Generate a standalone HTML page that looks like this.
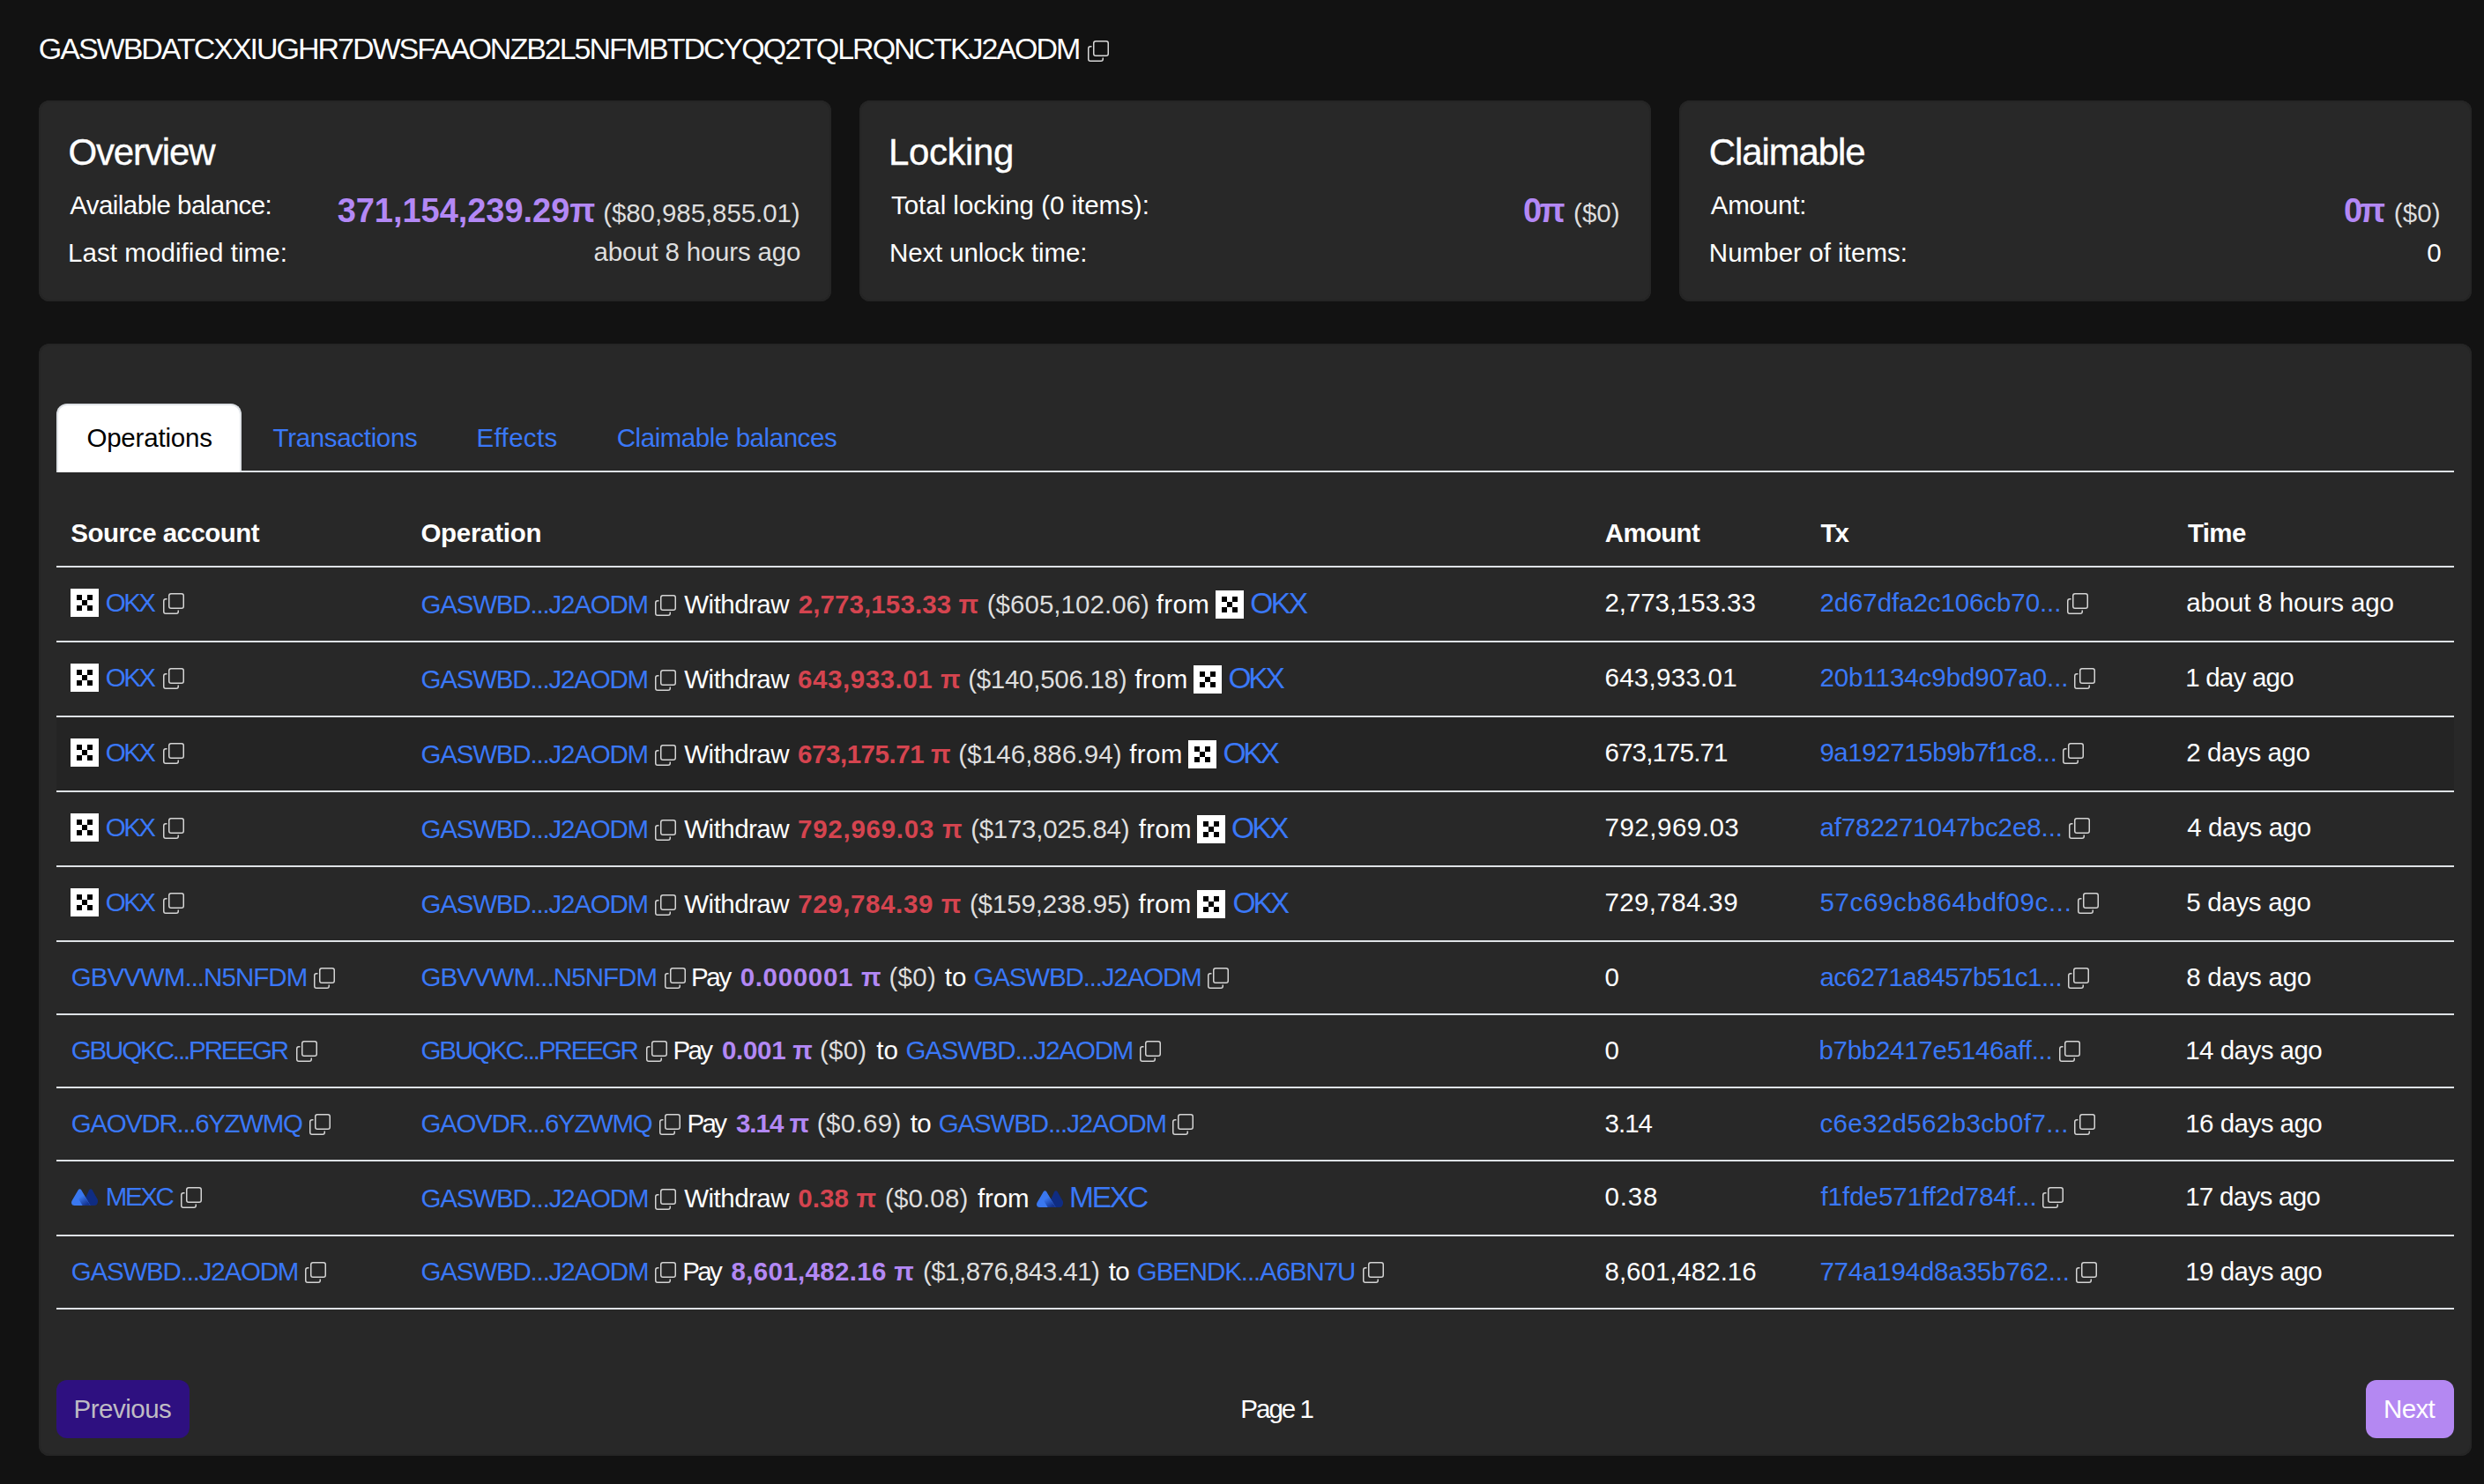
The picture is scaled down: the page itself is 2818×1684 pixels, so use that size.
<!DOCTYPE html>
<html><head><meta charset="utf-8"><style>
html,body{margin:0;padding:0;}
body{width:2818px;height:1684px;background:#121212;position:relative;overflow:hidden;font-family:"Liberation Sans", sans-serif;}
.t{position:absolute;white-space:pre;}
.ic{position:absolute;}
.card{position:absolute;top:114px;height:228px;background:#282828;border-radius:12px;box-shadow:inset 0 0 0 2px #252525;}
.hl{position:absolute;left:64px;width:2720px;height:2px;background:#dee2e6;}
</style></head><body>
<div class="card" style="left:44.00px;width:898.67px"></div>
<div class="card" style="left:974.67px;width:898.67px"></div>
<div class="card" style="left:1905.33px;width:898.67px"></div>
<div style="position:absolute;left:44px;top:390px;width:2760px;height:1262px;background:#282828;border-radius:12px;box-shadow:inset 0 0 0 2px #252525;"></div>
<div style="position:absolute;left:64px;top:458px;width:206px;height:76px;background:#fff;border:2px solid #dee2e6;border-bottom:none;border-radius:12px 12px 0 0;"></div>
<div style="position:absolute;left:274px;top:534px;width:2510px;height:2px;background:#dee2e6"></div>
<div style="position:absolute;left:64px;top:814px;width:2720px;height:83px;background:#242424"></div>
<div class="hl" style="top:642px"></div>
<div class="hl" style="top:727px"></div>
<div class="hl" style="top:812px"></div>
<div class="hl" style="top:897px"></div>
<div class="hl" style="top:982px"></div>
<div class="hl" style="top:1067px"></div>
<div class="hl" style="top:1150px"></div>
<div class="hl" style="top:1233px"></div>
<div class="hl" style="top:1316px"></div>
<div class="hl" style="top:1401px"></div>
<div class="hl" style="top:1484px"></div>
<div style="position:absolute;left:64px;top:1566px;width:151px;height:66px;background:#2e1080;border-radius:12px"></div>
<div style="position:absolute;left:2684px;top:1566px;width:100px;height:66px;background:#b488f2;border-radius:12px"></div>
<div class="t" style="left:43.8px;top:38.4px;font-size:34px;line-height:34px;font-weight:400;color:#ffffff;letter-spacing:-2.015px;">GASWBDATCXXIUGHR7DWSFAAONZB2L5NFMBTDCYQQ2TQLRQNCTKJ2AODM</div>
<div class="t" style="left:77.4px;top:151.7px;font-size:42px;line-height:42px;font-weight:400;color:#ffffff;letter-spacing:-1.114px;-webkit-text-stroke:0.35px currentColor;">Overview</div>
<div class="t" style="left:79.2px;top:218.1px;font-size:29.5px;line-height:29.5px;font-weight:400;color:#ffffff;letter-spacing:-0.547px;">Available balance:</div>
<div class="t" style="left:77.0px;top:272.1px;font-size:29.5px;line-height:29.5px;font-weight:400;color:#ffffff;letter-spacing:0.072px;">Last modified time:</div>
<div class="t" style="left:382.7px;top:219.8px;font-size:38px;line-height:38px;font-weight:700;color:#b388f5;letter-spacing:-0.043px;">371,154,239.29π</div>
<div class="t" style="left:684.2px;top:227.0px;font-size:29.5px;line-height:29.5px;font-weight:400;color:#dedede;letter-spacing:-0.087px;">($80,985,855.01)</div>
<div class="t" style="left:673.5px;top:271.3px;font-size:29.5px;line-height:29.5px;font-weight:400;color:#dedede;letter-spacing:-0.181px;">about 8 hours ago</div>
<div class="t" style="left:1008.1px;top:151.7px;font-size:42px;line-height:42px;font-weight:400;color:#ffffff;letter-spacing:-0.433px;-webkit-text-stroke:0.35px currentColor;">Locking</div>
<div class="t" style="left:1011.0px;top:218.1px;font-size:29.5px;line-height:29.5px;font-weight:400;color:#ffffff;letter-spacing:-0.026px;">Total locking (0 items):</div>
<div class="t" style="left:1009.0px;top:272.1px;font-size:29.5px;line-height:29.5px;font-weight:400;color:#ffffff;letter-spacing:-0.113px;">Next unlock time:</div>
<div class="t" style="left:1728.0px;top:219.8px;font-size:38px;line-height:38px;font-weight:700;color:#b388f5;letter-spacing:-2.600px;">0π</div>
<div class="t" style="left:1785.0px;top:227.0px;font-size:29.5px;line-height:29.5px;font-weight:400;color:#dedede;letter-spacing:0.067px;">($0)</div>
<div class="t" style="left:1938.8px;top:151.7px;font-size:42px;line-height:42px;font-weight:400;color:#ffffff;letter-spacing:-1.125px;-webkit-text-stroke:0.35px currentColor;">Claimable</div>
<div class="t" style="left:1940.8px;top:218.1px;font-size:29.5px;line-height:29.5px;font-weight:400;color:#ffffff;letter-spacing:-0.217px;">Amount:</div>
<div class="t" style="left:1938.8px;top:272.1px;font-size:29.5px;line-height:29.5px;font-weight:400;color:#ffffff;letter-spacing:0.040px;">Number of items:</div>
<div class="t" style="left:2658.9px;top:219.8px;font-size:38px;line-height:38px;font-weight:700;color:#b388f5;letter-spacing:-3.100px;">0π</div>
<div class="t" style="left:2715.7px;top:227.0px;font-size:29.5px;line-height:29.5px;font-weight:400;color:#dedede;letter-spacing:0.133px;">($0)</div>
<div class="t" style="left:2753.2px;top:272.1px;font-size:29.5px;line-height:29.5px;font-weight:400;color:#ffffff;letter-spacing:0.000px;">0</div>
<div class="t" style="left:98.4px;top:482.1px;font-size:29.5px;line-height:29.5px;font-weight:400;color:#000;letter-spacing:-0.200px;">Operations</div>
<div class="t" style="left:309.6px;top:482.1px;font-size:29.5px;line-height:29.5px;font-weight:400;color:#3a78f8;letter-spacing:-0.327px;">Transactions</div>
<div class="t" style="left:540.6px;top:482.1px;font-size:29.5px;line-height:29.5px;font-weight:400;color:#3a78f8;letter-spacing:0.333px;">Effects</div>
<div class="t" style="left:699.7px;top:482.1px;font-size:29.5px;line-height:29.5px;font-weight:400;color:#3a78f8;letter-spacing:-0.441px;">Claimable balances</div>
<div class="t" style="left:80.3px;top:590.2px;font-size:29.5px;line-height:29.5px;font-weight:700;color:#ffffff;letter-spacing:-0.538px;">Source account</div>
<div class="t" style="left:477.4px;top:590.2px;font-size:29.5px;line-height:29.5px;font-weight:700;color:#ffffff;letter-spacing:-0.288px;">Operation</div>
<div class="t" style="left:1820.8px;top:590.2px;font-size:29.5px;line-height:29.5px;font-weight:700;color:#ffffff;letter-spacing:-0.700px;">Amount</div>
<div class="t" style="left:2065.4px;top:590.2px;font-size:29.5px;line-height:29.5px;font-weight:700;color:#ffffff;letter-spacing:-2.000px;">Tx</div>
<div class="t" style="left:2482.0px;top:590.2px;font-size:29.5px;line-height:29.5px;font-weight:700;color:#ffffff;letter-spacing:-0.667px;">Time</div>
<div class="t" style="left:119.8px;top:669.0px;font-size:29.5px;line-height:29.5px;font-weight:400;color:#3a78f8;letter-spacing:-2.550px;">OKX</div>
<div class="t" style="left:477.5px;top:671.0px;font-size:29.5px;line-height:29.5px;font-weight:400;color:#3a78f8;letter-spacing:-1.193px;">GASWBD...J2AODM</div>
<div class="t" style="left:776.3px;top:671.0px;font-size:29.5px;line-height:29.5px;font-weight:400;color:#ffffff;letter-spacing:-0.529px;">Withdraw</div>
<div class="t" style="left:905.7px;top:671.0px;font-size:29.5px;line-height:29.5px;font-weight:700;color:#d5444f;letter-spacing:0.108px;">2,773,153.33 π</div>
<div class="t" style="left:1119.7px;top:671.0px;font-size:29.5px;line-height:29.5px;font-weight:400;color:#dedede;letter-spacing:0.042px;">($605,102.06)</div>
<div class="t" style="left:1311.8px;top:671.0px;font-size:29.5px;line-height:29.5px;font-weight:400;color:#ffffff;letter-spacing:0.333px;">from</div>
<div class="t" style="left:1418.3px;top:667.6px;font-size:33.5px;line-height:33.5px;font-weight:400;color:#3a78f8;letter-spacing:-2.500px;">OKX</div>
<div class="t" style="left:1820.5px;top:669.0px;font-size:29.5px;line-height:29.5px;font-weight:400;color:#ffffff;letter-spacing:-0.082px;">2,773,153.33</div>
<div class="t" style="left:2064.4px;top:669.0px;font-size:29.5px;line-height:29.5px;font-weight:400;color:#3a78f8;letter-spacing:-0.089px;">2d67dfa2c106cb70...</div>
<div class="t" style="left:2480.2px;top:669.0px;font-size:29.5px;line-height:29.5px;font-weight:400;color:#ffffff;letter-spacing:-0.125px;">about 8 hours ago</div>
<div class="t" style="left:119.8px;top:754.0px;font-size:29.5px;line-height:29.5px;font-weight:400;color:#3a78f8;letter-spacing:-2.550px;">OKX</div>
<div class="t" style="left:477.5px;top:756.0px;font-size:29.5px;line-height:29.5px;font-weight:400;color:#3a78f8;letter-spacing:-1.193px;">GASWBD...J2AODM</div>
<div class="t" style="left:776.3px;top:756.0px;font-size:29.5px;line-height:29.5px;font-weight:400;color:#ffffff;letter-spacing:-0.529px;">Withdraw</div>
<div class="t" style="left:905.0px;top:756.0px;font-size:29.5px;line-height:29.5px;font-weight:700;color:#d5444f;letter-spacing:0.564px;">643,933.01 π</div>
<div class="t" style="left:1098.2px;top:756.0px;font-size:29.5px;line-height:29.5px;font-weight:400;color:#dedede;letter-spacing:-0.283px;">($140,506.18)</div>
<div class="t" style="left:1287.3px;top:756.0px;font-size:29.5px;line-height:29.5px;font-weight:400;color:#ffffff;letter-spacing:0.333px;">from</div>
<div class="t" style="left:1393.5px;top:752.6px;font-size:33.5px;line-height:33.5px;font-weight:400;color:#3a78f8;letter-spacing:-3.250px;">OKX</div>
<div class="t" style="left:1820.5px;top:754.0px;font-size:29.5px;line-height:29.5px;font-weight:400;color:#ffffff;letter-spacing:0.278px;">643,933.01</div>
<div class="t" style="left:2064.4px;top:754.0px;font-size:29.5px;line-height:29.5px;font-weight:400;color:#3a78f8;letter-spacing:-0.061px;">20b1134c9bd907a0...</div>
<div class="t" style="left:2479.2px;top:754.0px;font-size:29.5px;line-height:29.5px;font-weight:400;color:#ffffff;letter-spacing:-0.775px;">1 day ago</div>
<div class="t" style="left:119.8px;top:839.0px;font-size:29.5px;line-height:29.5px;font-weight:400;color:#3a78f8;letter-spacing:-2.550px;">OKX</div>
<div class="t" style="left:477.5px;top:841.0px;font-size:29.5px;line-height:29.5px;font-weight:400;color:#3a78f8;letter-spacing:-1.193px;">GASWBD...J2AODM</div>
<div class="t" style="left:776.3px;top:841.0px;font-size:29.5px;line-height:29.5px;font-weight:400;color:#ffffff;letter-spacing:-0.529px;">Withdraw</div>
<div class="t" style="left:905.0px;top:841.0px;font-size:29.5px;line-height:29.5px;font-weight:700;color:#d5444f;letter-spacing:-0.445px;">673,175.71 π</div>
<div class="t" style="left:1087.2px;top:841.0px;font-size:29.5px;line-height:29.5px;font-weight:400;color:#dedede;letter-spacing:0.142px;">($146,886.94)</div>
<div class="t" style="left:1281.3px;top:841.0px;font-size:29.5px;line-height:29.5px;font-weight:400;color:#ffffff;letter-spacing:0.333px;">from</div>
<div class="t" style="left:1387.5px;top:837.6px;font-size:33.5px;line-height:33.5px;font-weight:400;color:#3a78f8;letter-spacing:-3.200px;">OKX</div>
<div class="t" style="left:1820.5px;top:839.0px;font-size:29.5px;line-height:29.5px;font-weight:400;color:#ffffff;letter-spacing:-0.856px;">673,175.71</div>
<div class="t" style="left:2064.4px;top:839.0px;font-size:29.5px;line-height:29.5px;font-weight:400;color:#3a78f8;letter-spacing:-0.433px;">9a192715b9b7f1c8...</div>
<div class="t" style="left:2480.2px;top:839.0px;font-size:29.5px;line-height:29.5px;font-weight:400;color:#ffffff;letter-spacing:-0.389px;">2 days ago</div>
<div class="t" style="left:119.8px;top:924.0px;font-size:29.5px;line-height:29.5px;font-weight:400;color:#3a78f8;letter-spacing:-2.550px;">OKX</div>
<div class="t" style="left:477.5px;top:926.0px;font-size:29.5px;line-height:29.5px;font-weight:400;color:#3a78f8;letter-spacing:-1.193px;">GASWBD...J2AODM</div>
<div class="t" style="left:776.3px;top:926.0px;font-size:29.5px;line-height:29.5px;font-weight:400;color:#ffffff;letter-spacing:-0.529px;">Withdraw</div>
<div class="t" style="left:905.0px;top:926.0px;font-size:29.5px;line-height:29.5px;font-weight:700;color:#d5444f;letter-spacing:0.745px;">792,969.03 π</div>
<div class="t" style="left:1101.2px;top:926.0px;font-size:29.5px;line-height:29.5px;font-weight:400;color:#dedede;letter-spacing:-0.283px;">($173,025.84)</div>
<div class="t" style="left:1291.7px;top:926.0px;font-size:29.5px;line-height:29.5px;font-weight:400;color:#ffffff;letter-spacing:0.333px;">from</div>
<div class="t" style="left:1397.1px;top:922.6px;font-size:33.5px;line-height:33.5px;font-weight:400;color:#3a78f8;letter-spacing:-2.800px;">OKX</div>
<div class="t" style="left:1820.5px;top:924.0px;font-size:29.5px;line-height:29.5px;font-weight:400;color:#ffffff;letter-spacing:0.511px;">792,969.03</div>
<div class="t" style="left:2064.4px;top:924.0px;font-size:29.5px;line-height:29.5px;font-weight:400;color:#3a78f8;letter-spacing:-0.094px;">af782271047bc2e8...</div>
<div class="t" style="left:2481.2px;top:924.0px;font-size:29.5px;line-height:29.5px;font-weight:400;color:#ffffff;letter-spacing:-0.367px;">4 days ago</div>
<div class="t" style="left:119.8px;top:1009.0px;font-size:29.5px;line-height:29.5px;font-weight:400;color:#3a78f8;letter-spacing:-2.550px;">OKX</div>
<div class="t" style="left:477.5px;top:1011.0px;font-size:29.5px;line-height:29.5px;font-weight:400;color:#3a78f8;letter-spacing:-1.193px;">GASWBD...J2AODM</div>
<div class="t" style="left:776.3px;top:1011.0px;font-size:29.5px;line-height:29.5px;font-weight:400;color:#ffffff;letter-spacing:-0.529px;">Withdraw</div>
<div class="t" style="left:905.2px;top:1011.0px;font-size:29.5px;line-height:29.5px;font-weight:700;color:#d5444f;letter-spacing:0.609px;">729,784.39 π</div>
<div class="t" style="left:1099.9px;top:1011.0px;font-size:29.5px;line-height:29.5px;font-weight:400;color:#dedede;letter-spacing:-0.125px;">($159,238.95)</div>
<div class="t" style="left:1291.6px;top:1011.0px;font-size:29.5px;line-height:29.5px;font-weight:400;color:#ffffff;letter-spacing:0.233px;">from</div>
<div class="t" style="left:1398.5px;top:1007.6px;font-size:33.5px;line-height:33.5px;font-weight:400;color:#3a78f8;letter-spacing:-3.100px;">OKX</div>
<div class="t" style="left:1820.5px;top:1009.0px;font-size:29.5px;line-height:29.5px;font-weight:400;color:#ffffff;letter-spacing:0.378px;">729,784.39</div>
<div class="t" style="left:2064.4px;top:1009.0px;font-size:29.5px;line-height:29.5px;font-weight:400;color:#3a78f8;letter-spacing:0.644px;">57c69cb864bdf09c...</div>
<div class="t" style="left:2480.2px;top:1009.0px;font-size:29.5px;line-height:29.5px;font-weight:400;color:#ffffff;letter-spacing:-0.300px;">5 days ago</div>
<div class="t" style="left:80.7px;top:1094.0px;font-size:29.5px;line-height:29.5px;font-weight:400;color:#3a78f8;letter-spacing:-0.950px;">GBVVWM...N5NFDM</div>
<div class="t" style="left:477.4px;top:1094.0px;font-size:29.5px;line-height:29.5px;font-weight:400;color:#3a78f8;letter-spacing:-0.950px;">GBVVWM...N5NFDM</div>
<div class="t" style="left:784.0px;top:1094.0px;font-size:29.5px;line-height:29.5px;font-weight:400;color:#ffffff;letter-spacing:-2.350px;">Pay</div>
<div class="t" style="left:839.7px;top:1094.0px;font-size:29.5px;line-height:29.5px;font-weight:700;color:#b388f5;letter-spacing:0.667px;">0.000001 π</div>
<div class="t" style="left:1008.5px;top:1094.0px;font-size:29.5px;line-height:29.5px;font-weight:400;color:#dedede;letter-spacing:0.267px;">($0)</div>
<div class="t" style="left:1071.8px;top:1094.0px;font-size:29.5px;line-height:29.5px;font-weight:400;color:#ffffff;letter-spacing:0.100px;">to</div>
<div class="t" style="left:1104.5px;top:1094.0px;font-size:29.5px;line-height:29.5px;font-weight:400;color:#3a78f8;letter-spacing:-1.150px;">GASWBD...J2AODM</div>
<div class="t" style="left:1820.5px;top:1094.0px;font-size:29.5px;line-height:29.5px;font-weight:400;color:#ffffff;letter-spacing:0.000px;">0</div>
<div class="t" style="left:2064.4px;top:1094.0px;font-size:29.5px;line-height:29.5px;font-weight:400;color:#3a78f8;letter-spacing:-0.472px;">ac6271a8457b51c1...</div>
<div class="t" style="left:2480.2px;top:1094.0px;font-size:29.5px;line-height:29.5px;font-weight:400;color:#ffffff;letter-spacing:-0.256px;">8 days ago</div>
<div class="t" style="left:80.7px;top:1177.0px;font-size:29.5px;line-height:29.5px;font-weight:400;color:#3a78f8;letter-spacing:-2.114px;">GBUQKC...PREEGR</div>
<div class="t" style="left:477.5px;top:1177.0px;font-size:29.5px;line-height:29.5px;font-weight:400;color:#3a78f8;letter-spacing:-2.114px;">GBUQKC...PREEGR</div>
<div class="t" style="left:763.5px;top:1177.0px;font-size:29.5px;line-height:29.5px;font-weight:400;color:#ffffff;letter-spacing:-2.650px;">Pay</div>
<div class="t" style="left:818.9px;top:1177.0px;font-size:29.5px;line-height:29.5px;font-weight:700;color:#b388f5;letter-spacing:-0.283px;">0.001 π</div>
<div class="t" style="left:929.9px;top:1177.0px;font-size:29.5px;line-height:29.5px;font-weight:400;color:#dedede;letter-spacing:0.267px;">($0)</div>
<div class="t" style="left:994.3px;top:1177.0px;font-size:29.5px;line-height:29.5px;font-weight:400;color:#ffffff;letter-spacing:-0.100px;">to</div>
<div class="t" style="left:1027.4px;top:1177.0px;font-size:29.5px;line-height:29.5px;font-weight:400;color:#3a78f8;letter-spacing:-1.171px;">GASWBD...J2AODM</div>
<div class="t" style="left:1820.5px;top:1177.0px;font-size:29.5px;line-height:29.5px;font-weight:400;color:#ffffff;letter-spacing:0.000px;">0</div>
<div class="t" style="left:2063.4px;top:1177.0px;font-size:29.5px;line-height:29.5px;font-weight:400;color:#3a78f8;letter-spacing:-0.267px;">b7bb2417e5146aff...</div>
<div class="t" style="left:2479.2px;top:1177.0px;font-size:29.5px;line-height:29.5px;font-weight:400;color:#ffffff;letter-spacing:-0.520px;">14 days ago</div>
<div class="t" style="left:80.7px;top:1260.0px;font-size:29.5px;line-height:29.5px;font-weight:400;color:#3a78f8;letter-spacing:-1.329px;">GAOVDR...6YZWMQ</div>
<div class="t" style="left:477.5px;top:1260.0px;font-size:29.5px;line-height:29.5px;font-weight:400;color:#3a78f8;letter-spacing:-1.329px;">GAOVDR...6YZWMQ</div>
<div class="t" style="left:779.5px;top:1260.0px;font-size:29.5px;line-height:29.5px;font-weight:400;color:#ffffff;letter-spacing:-2.650px;">Pay</div>
<div class="t" style="left:834.9px;top:1260.0px;font-size:29.5px;line-height:29.5px;font-weight:700;color:#b388f5;letter-spacing:-0.980px;">3.14 π</div>
<div class="t" style="left:926.7px;top:1260.0px;font-size:29.5px;line-height:29.5px;font-weight:400;color:#dedede;letter-spacing:0.367px;">($0.69)</div>
<div class="t" style="left:1032.7px;top:1260.0px;font-size:29.5px;line-height:29.5px;font-weight:400;color:#ffffff;letter-spacing:-0.600px;">to</div>
<div class="t" style="left:1064.7px;top:1260.0px;font-size:29.5px;line-height:29.5px;font-weight:400;color:#3a78f8;letter-spacing:-1.136px;">GASWBD...J2AODM</div>
<div class="t" style="left:1820.5px;top:1260.0px;font-size:29.5px;line-height:29.5px;font-weight:400;color:#ffffff;letter-spacing:-0.967px;">3.14</div>
<div class="t" style="left:2064.4px;top:1260.0px;font-size:29.5px;line-height:29.5px;font-weight:400;color:#3a78f8;letter-spacing:0.361px;">c6e32d562b3cb0f7...</div>
<div class="t" style="left:2479.2px;top:1260.0px;font-size:29.5px;line-height:29.5px;font-weight:400;color:#ffffff;letter-spacing:-0.520px;">16 days ago</div>
<div class="t" style="left:119.7px;top:1343.0px;font-size:29.5px;line-height:29.5px;font-weight:400;color:#3a78f8;letter-spacing:-2.333px;">MEXC</div>
<div class="t" style="left:477.5px;top:1345.0px;font-size:29.5px;line-height:29.5px;font-weight:400;color:#3a78f8;letter-spacing:-1.171px;">GASWBD...J2AODM</div>
<div class="t" style="left:776.2px;top:1345.0px;font-size:29.5px;line-height:29.5px;font-weight:400;color:#ffffff;letter-spacing:-0.514px;">Withdraw</div>
<div class="t" style="left:905.3px;top:1345.0px;font-size:29.5px;line-height:29.5px;font-weight:700;color:#d5444f;letter-spacing:0.100px;">0.38 π</div>
<div class="t" style="left:1004.0px;top:1345.0px;font-size:29.5px;line-height:29.5px;font-weight:400;color:#dedede;letter-spacing:0.133px;">($0.08)</div>
<div class="t" style="left:1109.1px;top:1345.0px;font-size:29.5px;line-height:29.5px;font-weight:400;color:#ffffff;letter-spacing:-0.167px;">from</div>
<div class="t" style="left:1212.9px;top:1341.6px;font-size:33.5px;line-height:33.5px;font-weight:400;color:#3a78f8;letter-spacing:-2.167px;">MEXC</div>
<div class="t" style="left:1820.5px;top:1343.0px;font-size:29.5px;line-height:29.5px;font-weight:400;color:#ffffff;letter-spacing:0.867px;">0.38</div>
<div class="t" style="left:2065.4px;top:1343.0px;font-size:29.5px;line-height:29.5px;font-weight:400;color:#3a78f8;letter-spacing:-0.011px;">f1fde571ff2d784f...</div>
<div class="t" style="left:2479.2px;top:1343.0px;font-size:29.5px;line-height:29.5px;font-weight:400;color:#ffffff;letter-spacing:-0.720px;">17 days ago</div>
<div class="t" style="left:80.7px;top:1428.0px;font-size:29.5px;line-height:29.5px;font-weight:400;color:#3a78f8;letter-spacing:-1.193px;">GASWBD...J2AODM</div>
<div class="t" style="left:477.5px;top:1428.0px;font-size:29.5px;line-height:29.5px;font-weight:400;color:#3a78f8;letter-spacing:-1.171px;">GASWBD...J2AODM</div>
<div class="t" style="left:774.2px;top:1428.0px;font-size:29.5px;line-height:29.5px;font-weight:400;color:#ffffff;letter-spacing:-2.650px;">Pay</div>
<div class="t" style="left:829.6px;top:1428.0px;font-size:29.5px;line-height:29.5px;font-weight:700;color:#b388f5;letter-spacing:0.315px;">8,601,482.16 π</div>
<div class="t" style="left:1046.9px;top:1428.0px;font-size:29.5px;line-height:29.5px;font-weight:400;color:#dedede;letter-spacing:-0.521px;">($1,876,843.41)</div>
<div class="t" style="left:1257.7px;top:1428.0px;font-size:29.5px;line-height:29.5px;font-weight:400;color:#ffffff;letter-spacing:-0.700px;">to</div>
<div class="t" style="left:1289.8px;top:1428.0px;font-size:29.5px;line-height:29.5px;font-weight:400;color:#3a78f8;letter-spacing:-1.100px;">GBENDK...A6BN7U</div>
<div class="t" style="left:1820.5px;top:1428.0px;font-size:29.5px;line-height:29.5px;font-weight:400;color:#ffffff;letter-spacing:-0.009px;">8,601,482.16</div>
<div class="t" style="left:2064.4px;top:1428.0px;font-size:29.5px;line-height:29.5px;font-weight:400;color:#3a78f8;letter-spacing:-0.194px;">774a194d8a35b762...</div>
<div class="t" style="left:2479.2px;top:1428.0px;font-size:29.5px;line-height:29.5px;font-weight:400;color:#ffffff;letter-spacing:-0.520px;">19 days ago</div>
<div class="t" style="left:83.5px;top:1584.2px;font-size:29.5px;line-height:29.5px;font-weight:400;color:#bfbcc4;letter-spacing:-0.486px;">Previous</div>
<div class="t" style="left:1407.3px;top:1584.2px;font-size:29.5px;line-height:29.5px;font-weight:400;color:#ffffff;letter-spacing:-2.000px;">Page 1</div>
<div class="t" style="left:2704.1px;top:1584.2px;font-size:29.5px;line-height:29.5px;font-weight:400;color:#ffffff;letter-spacing:-0.667px;">Next</div>
<svg class="ic" style="left:1234.0px;top:46.2px" width="24" height="24" viewBox="0 0 16 16" fill="#d8d8d8"><path d="M4 2a2 2 0 0 1 2-2h8a2 2 0 0 1 2 2v8a2 2 0 0 1-2 2H6a2 2 0 0 1-2-2zm2-1a1 1 0 0 0-1 1v8a1 1 0 0 0 1 1h8a1 1 0 0 0 1-1V2a1 1 0 0 0-1-1zM2 5a1 1 0 0 0-1 1v8a1 1 0 0 0 1 1h8a1 1 0 0 0 1-1v-1h1v1a2 2 0 0 1-2 2H2a2 2 0 0 1-2-2V6a2 2 0 0 1 2-2h1v1z"/></svg>
<svg class="ic" style="left:80.0px;top:668.0px" width="32" height="32" viewBox="0 0 32 32"><rect width="32" height="32" fill="#fff"/><path d="M7 7h6v6H7zM19 7h6v6h-6zM13 13h6v6h-6zM7 19h6v6H7zM19 19h6v6h-6z" fill="#000"/></svg>
<svg class="ic" style="left:185.0px;top:673.0px" width="24" height="24" viewBox="0 0 16 16" fill="#d4d4d4"><path d="M4 2a2 2 0 0 1 2-2h8a2 2 0 0 1 2 2v8a2 2 0 0 1-2 2H6a2 2 0 0 1-2-2zm2-1a1 1 0 0 0-1 1v8a1 1 0 0 0 1 1h8a1 1 0 0 0 1-1V2a1 1 0 0 0-1-1zM2 5a1 1 0 0 0-1 1v8a1 1 0 0 0 1 1h8a1 1 0 0 0 1-1v-1h1v1a2 2 0 0 1-2 2H2a2 2 0 0 1-2-2V6a2 2 0 0 1 2-2h1v1z"/></svg>
<svg class="ic" style="left:743.0px;top:675.0px" width="24" height="24" viewBox="0 0 16 16" fill="#d4d4d4"><path d="M4 2a2 2 0 0 1 2-2h8a2 2 0 0 1 2 2v8a2 2 0 0 1-2 2H6a2 2 0 0 1-2-2zm2-1a1 1 0 0 0-1 1v8a1 1 0 0 0 1 1h8a1 1 0 0 0 1-1V2a1 1 0 0 0-1-1zM2 5a1 1 0 0 0-1 1v8a1 1 0 0 0 1 1h8a1 1 0 0 0 1-1v-1h1v1a2 2 0 0 1-2 2H2a2 2 0 0 1-2-2V6a2 2 0 0 1 2-2h1v1z"/></svg>
<svg class="ic" style="left:1379.0px;top:670.0px" width="32" height="32" viewBox="0 0 32 32"><rect width="32" height="32" fill="#fff"/><path d="M7 7h6v6H7zM19 7h6v6h-6zM13 13h6v6h-6zM7 19h6v6H7zM19 19h6v6h-6z" fill="#000"/></svg>
<svg class="ic" style="left:2345.0px;top:673.0px" width="24" height="24" viewBox="0 0 16 16" fill="#d4d4d4"><path d="M4 2a2 2 0 0 1 2-2h8a2 2 0 0 1 2 2v8a2 2 0 0 1-2 2H6a2 2 0 0 1-2-2zm2-1a1 1 0 0 0-1 1v8a1 1 0 0 0 1 1h8a1 1 0 0 0 1-1V2a1 1 0 0 0-1-1zM2 5a1 1 0 0 0-1 1v8a1 1 0 0 0 1 1h8a1 1 0 0 0 1-1v-1h1v1a2 2 0 0 1-2 2H2a2 2 0 0 1-2-2V6a2 2 0 0 1 2-2h1v1z"/></svg>
<svg class="ic" style="left:80.0px;top:753.0px" width="32" height="32" viewBox="0 0 32 32"><rect width="32" height="32" fill="#fff"/><path d="M7 7h6v6H7zM19 7h6v6h-6zM13 13h6v6h-6zM7 19h6v6H7zM19 19h6v6h-6z" fill="#000"/></svg>
<svg class="ic" style="left:185.0px;top:758.0px" width="24" height="24" viewBox="0 0 16 16" fill="#d4d4d4"><path d="M4 2a2 2 0 0 1 2-2h8a2 2 0 0 1 2 2v8a2 2 0 0 1-2 2H6a2 2 0 0 1-2-2zm2-1a1 1 0 0 0-1 1v8a1 1 0 0 0 1 1h8a1 1 0 0 0 1-1V2a1 1 0 0 0-1-1zM2 5a1 1 0 0 0-1 1v8a1 1 0 0 0 1 1h8a1 1 0 0 0 1-1v-1h1v1a2 2 0 0 1-2 2H2a2 2 0 0 1-2-2V6a2 2 0 0 1 2-2h1v1z"/></svg>
<svg class="ic" style="left:743.0px;top:760.0px" width="24" height="24" viewBox="0 0 16 16" fill="#d4d4d4"><path d="M4 2a2 2 0 0 1 2-2h8a2 2 0 0 1 2 2v8a2 2 0 0 1-2 2H6a2 2 0 0 1-2-2zm2-1a1 1 0 0 0-1 1v8a1 1 0 0 0 1 1h8a1 1 0 0 0 1-1V2a1 1 0 0 0-1-1zM2 5a1 1 0 0 0-1 1v8a1 1 0 0 0 1 1h8a1 1 0 0 0 1-1v-1h1v1a2 2 0 0 1-2 2H2a2 2 0 0 1-2-2V6a2 2 0 0 1 2-2h1v1z"/></svg>
<svg class="ic" style="left:1354.3px;top:755.0px" width="32" height="32" viewBox="0 0 32 32"><rect width="32" height="32" fill="#fff"/><path d="M7 7h6v6H7zM19 7h6v6h-6zM13 13h6v6h-6zM7 19h6v6H7zM19 19h6v6h-6z" fill="#000"/></svg>
<svg class="ic" style="left:2353.3px;top:758.0px" width="24" height="24" viewBox="0 0 16 16" fill="#d4d4d4"><path d="M4 2a2 2 0 0 1 2-2h8a2 2 0 0 1 2 2v8a2 2 0 0 1-2 2H6a2 2 0 0 1-2-2zm2-1a1 1 0 0 0-1 1v8a1 1 0 0 0 1 1h8a1 1 0 0 0 1-1V2a1 1 0 0 0-1-1zM2 5a1 1 0 0 0-1 1v8a1 1 0 0 0 1 1h8a1 1 0 0 0 1-1v-1h1v1a2 2 0 0 1-2 2H2a2 2 0 0 1-2-2V6a2 2 0 0 1 2-2h1v1z"/></svg>
<svg class="ic" style="left:80.0px;top:838.0px" width="32" height="32" viewBox="0 0 32 32"><rect width="32" height="32" fill="#fff"/><path d="M7 7h6v6H7zM19 7h6v6h-6zM13 13h6v6h-6zM7 19h6v6H7zM19 19h6v6h-6z" fill="#000"/></svg>
<svg class="ic" style="left:185.0px;top:843.0px" width="24" height="24" viewBox="0 0 16 16" fill="#d4d4d4"><path d="M4 2a2 2 0 0 1 2-2h8a2 2 0 0 1 2 2v8a2 2 0 0 1-2 2H6a2 2 0 0 1-2-2zm2-1a1 1 0 0 0-1 1v8a1 1 0 0 0 1 1h8a1 1 0 0 0 1-1V2a1 1 0 0 0-1-1zM2 5a1 1 0 0 0-1 1v8a1 1 0 0 0 1 1h8a1 1 0 0 0 1-1v-1h1v1a2 2 0 0 1-2 2H2a2 2 0 0 1-2-2V6a2 2 0 0 1 2-2h1v1z"/></svg>
<svg class="ic" style="left:743.0px;top:845.0px" width="24" height="24" viewBox="0 0 16 16" fill="#d4d4d4"><path d="M4 2a2 2 0 0 1 2-2h8a2 2 0 0 1 2 2v8a2 2 0 0 1-2 2H6a2 2 0 0 1-2-2zm2-1a1 1 0 0 0-1 1v8a1 1 0 0 0 1 1h8a1 1 0 0 0 1-1V2a1 1 0 0 0-1-1zM2 5a1 1 0 0 0-1 1v8a1 1 0 0 0 1 1h8a1 1 0 0 0 1-1v-1h1v1a2 2 0 0 1-2 2H2a2 2 0 0 1-2-2V6a2 2 0 0 1 2-2h1v1z"/></svg>
<svg class="ic" style="left:1348.3px;top:840.0px" width="32" height="32" viewBox="0 0 32 32"><rect width="32" height="32" fill="#fff"/><path d="M7 7h6v6H7zM19 7h6v6h-6zM13 13h6v6h-6zM7 19h6v6H7zM19 19h6v6h-6z" fill="#000"/></svg>
<svg class="ic" style="left:2340.2px;top:843.0px" width="24" height="24" viewBox="0 0 16 16" fill="#d4d4d4"><path d="M4 2a2 2 0 0 1 2-2h8a2 2 0 0 1 2 2v8a2 2 0 0 1-2 2H6a2 2 0 0 1-2-2zm2-1a1 1 0 0 0-1 1v8a1 1 0 0 0 1 1h8a1 1 0 0 0 1-1V2a1 1 0 0 0-1-1zM2 5a1 1 0 0 0-1 1v8a1 1 0 0 0 1 1h8a1 1 0 0 0 1-1v-1h1v1a2 2 0 0 1-2 2H2a2 2 0 0 1-2-2V6a2 2 0 0 1 2-2h1v1z"/></svg>
<svg class="ic" style="left:80.0px;top:923.0px" width="32" height="32" viewBox="0 0 32 32"><rect width="32" height="32" fill="#fff"/><path d="M7 7h6v6H7zM19 7h6v6h-6zM13 13h6v6h-6zM7 19h6v6H7zM19 19h6v6h-6z" fill="#000"/></svg>
<svg class="ic" style="left:185.0px;top:928.0px" width="24" height="24" viewBox="0 0 16 16" fill="#d4d4d4"><path d="M4 2a2 2 0 0 1 2-2h8a2 2 0 0 1 2 2v8a2 2 0 0 1-2 2H6a2 2 0 0 1-2-2zm2-1a1 1 0 0 0-1 1v8a1 1 0 0 0 1 1h8a1 1 0 0 0 1-1V2a1 1 0 0 0-1-1zM2 5a1 1 0 0 0-1 1v8a1 1 0 0 0 1 1h8a1 1 0 0 0 1-1v-1h1v1a2 2 0 0 1-2 2H2a2 2 0 0 1-2-2V6a2 2 0 0 1 2-2h1v1z"/></svg>
<svg class="ic" style="left:743.0px;top:930.0px" width="24" height="24" viewBox="0 0 16 16" fill="#d4d4d4"><path d="M4 2a2 2 0 0 1 2-2h8a2 2 0 0 1 2 2v8a2 2 0 0 1-2 2H6a2 2 0 0 1-2-2zm2-1a1 1 0 0 0-1 1v8a1 1 0 0 0 1 1h8a1 1 0 0 0 1-1V2a1 1 0 0 0-1-1zM2 5a1 1 0 0 0-1 1v8a1 1 0 0 0 1 1h8a1 1 0 0 0 1-1v-1h1v1a2 2 0 0 1-2 2H2a2 2 0 0 1-2-2V6a2 2 0 0 1 2-2h1v1z"/></svg>
<svg class="ic" style="left:1358.2px;top:925.0px" width="32" height="32" viewBox="0 0 32 32"><rect width="32" height="32" fill="#fff"/><path d="M7 7h6v6H7zM19 7h6v6h-6zM13 13h6v6h-6zM7 19h6v6H7zM19 19h6v6h-6z" fill="#000"/></svg>
<svg class="ic" style="left:2347.1px;top:928.0px" width="24" height="24" viewBox="0 0 16 16" fill="#d4d4d4"><path d="M4 2a2 2 0 0 1 2-2h8a2 2 0 0 1 2 2v8a2 2 0 0 1-2 2H6a2 2 0 0 1-2-2zm2-1a1 1 0 0 0-1 1v8a1 1 0 0 0 1 1h8a1 1 0 0 0 1-1V2a1 1 0 0 0-1-1zM2 5a1 1 0 0 0-1 1v8a1 1 0 0 0 1 1h8a1 1 0 0 0 1-1v-1h1v1a2 2 0 0 1-2 2H2a2 2 0 0 1-2-2V6a2 2 0 0 1 2-2h1v1z"/></svg>
<svg class="ic" style="left:80.0px;top:1008.0px" width="32" height="32" viewBox="0 0 32 32"><rect width="32" height="32" fill="#fff"/><path d="M7 7h6v6H7zM19 7h6v6h-6zM13 13h6v6h-6zM7 19h6v6H7zM19 19h6v6h-6z" fill="#000"/></svg>
<svg class="ic" style="left:185.0px;top:1013.0px" width="24" height="24" viewBox="0 0 16 16" fill="#d4d4d4"><path d="M4 2a2 2 0 0 1 2-2h8a2 2 0 0 1 2 2v8a2 2 0 0 1-2 2H6a2 2 0 0 1-2-2zm2-1a1 1 0 0 0-1 1v8a1 1 0 0 0 1 1h8a1 1 0 0 0 1-1V2a1 1 0 0 0-1-1zM2 5a1 1 0 0 0-1 1v8a1 1 0 0 0 1 1h8a1 1 0 0 0 1-1v-1h1v1a2 2 0 0 1-2 2H2a2 2 0 0 1-2-2V6a2 2 0 0 1 2-2h1v1z"/></svg>
<svg class="ic" style="left:743.0px;top:1015.0px" width="24" height="24" viewBox="0 0 16 16" fill="#d4d4d4"><path d="M4 2a2 2 0 0 1 2-2h8a2 2 0 0 1 2 2v8a2 2 0 0 1-2 2H6a2 2 0 0 1-2-2zm2-1a1 1 0 0 0-1 1v8a1 1 0 0 0 1 1h8a1 1 0 0 0 1-1V2a1 1 0 0 0-1-1zM2 5a1 1 0 0 0-1 1v8a1 1 0 0 0 1 1h8a1 1 0 0 0 1-1v-1h1v1a2 2 0 0 1-2 2H2a2 2 0 0 1-2-2V6a2 2 0 0 1 2-2h1v1z"/></svg>
<svg class="ic" style="left:1358.0px;top:1010.0px" width="32" height="32" viewBox="0 0 32 32"><rect width="32" height="32" fill="#fff"/><path d="M7 7h6v6H7zM19 7h6v6h-6zM13 13h6v6h-6zM7 19h6v6H7zM19 19h6v6h-6z" fill="#000"/></svg>
<svg class="ic" style="left:2356.6px;top:1013.0px" width="24" height="24" viewBox="0 0 16 16" fill="#d4d4d4"><path d="M4 2a2 2 0 0 1 2-2h8a2 2 0 0 1 2 2v8a2 2 0 0 1-2 2H6a2 2 0 0 1-2-2zm2-1a1 1 0 0 0-1 1v8a1 1 0 0 0 1 1h8a1 1 0 0 0 1-1V2a1 1 0 0 0-1-1zM2 5a1 1 0 0 0-1 1v8a1 1 0 0 0 1 1h8a1 1 0 0 0 1-1v-1h1v1a2 2 0 0 1-2 2H2a2 2 0 0 1-2-2V6a2 2 0 0 1 2-2h1v1z"/></svg>
<svg class="ic" style="left:355.9px;top:1098.0px" width="24" height="24" viewBox="0 0 16 16" fill="#d4d4d4"><path d="M4 2a2 2 0 0 1 2-2h8a2 2 0 0 1 2 2v8a2 2 0 0 1-2 2H6a2 2 0 0 1-2-2zm2-1a1 1 0 0 0-1 1v8a1 1 0 0 0 1 1h8a1 1 0 0 0 1-1V2a1 1 0 0 0-1-1zM2 5a1 1 0 0 0-1 1v8a1 1 0 0 0 1 1h8a1 1 0 0 0 1-1v-1h1v1a2 2 0 0 1-2 2H2a2 2 0 0 1-2-2V6a2 2 0 0 1 2-2h1v1z"/></svg>
<svg class="ic" style="left:753.7px;top:1098.0px" width="24" height="24" viewBox="0 0 16 16" fill="#d4d4d4"><path d="M4 2a2 2 0 0 1 2-2h8a2 2 0 0 1 2 2v8a2 2 0 0 1-2 2H6a2 2 0 0 1-2-2zm2-1a1 1 0 0 0-1 1v8a1 1 0 0 0 1 1h8a1 1 0 0 0 1-1V2a1 1 0 0 0-1-1zM2 5a1 1 0 0 0-1 1v8a1 1 0 0 0 1 1h8a1 1 0 0 0 1-1v-1h1v1a2 2 0 0 1-2 2H2a2 2 0 0 1-2-2V6a2 2 0 0 1 2-2h1v1z"/></svg>
<svg class="ic" style="left:1369.6px;top:1098.0px" width="24" height="24" viewBox="0 0 16 16" fill="#d4d4d4"><path d="M4 2a2 2 0 0 1 2-2h8a2 2 0 0 1 2 2v8a2 2 0 0 1-2 2H6a2 2 0 0 1-2-2zm2-1a1 1 0 0 0-1 1v8a1 1 0 0 0 1 1h8a1 1 0 0 0 1-1V2a1 1 0 0 0-1-1zM2 5a1 1 0 0 0-1 1v8a1 1 0 0 0 1 1h8a1 1 0 0 0 1-1v-1h1v1a2 2 0 0 1-2 2H2a2 2 0 0 1-2-2V6a2 2 0 0 1 2-2h1v1z"/></svg>
<svg class="ic" style="left:2345.9px;top:1098.0px" width="24" height="24" viewBox="0 0 16 16" fill="#d4d4d4"><path d="M4 2a2 2 0 0 1 2-2h8a2 2 0 0 1 2 2v8a2 2 0 0 1-2 2H6a2 2 0 0 1-2-2zm2-1a1 1 0 0 0-1 1v8a1 1 0 0 0 1 1h8a1 1 0 0 0 1-1V2a1 1 0 0 0-1-1zM2 5a1 1 0 0 0-1 1v8a1 1 0 0 0 1 1h8a1 1 0 0 0 1-1v-1h1v1a2 2 0 0 1-2 2H2a2 2 0 0 1-2-2V6a2 2 0 0 1 2-2h1v1z"/></svg>
<svg class="ic" style="left:335.9px;top:1181.0px" width="24" height="24" viewBox="0 0 16 16" fill="#d4d4d4"><path d="M4 2a2 2 0 0 1 2-2h8a2 2 0 0 1 2 2v8a2 2 0 0 1-2 2H6a2 2 0 0 1-2-2zm2-1a1 1 0 0 0-1 1v8a1 1 0 0 0 1 1h8a1 1 0 0 0 1-1V2a1 1 0 0 0-1-1zM2 5a1 1 0 0 0-1 1v8a1 1 0 0 0 1 1h8a1 1 0 0 0 1-1v-1h1v1a2 2 0 0 1-2 2H2a2 2 0 0 1-2-2V6a2 2 0 0 1 2-2h1v1z"/></svg>
<svg class="ic" style="left:732.9px;top:1181.0px" width="24" height="24" viewBox="0 0 16 16" fill="#d4d4d4"><path d="M4 2a2 2 0 0 1 2-2h8a2 2 0 0 1 2 2v8a2 2 0 0 1-2 2H6a2 2 0 0 1-2-2zm2-1a1 1 0 0 0-1 1v8a1 1 0 0 0 1 1h8a1 1 0 0 0 1-1V2a1 1 0 0 0-1-1zM2 5a1 1 0 0 0-1 1v8a1 1 0 0 0 1 1h8a1 1 0 0 0 1-1v-1h1v1a2 2 0 0 1-2 2H2a2 2 0 0 1-2-2V6a2 2 0 0 1 2-2h1v1z"/></svg>
<svg class="ic" style="left:1293.0px;top:1181.0px" width="24" height="24" viewBox="0 0 16 16" fill="#d4d4d4"><path d="M4 2a2 2 0 0 1 2-2h8a2 2 0 0 1 2 2v8a2 2 0 0 1-2 2H6a2 2 0 0 1-2-2zm2-1a1 1 0 0 0-1 1v8a1 1 0 0 0 1 1h8a1 1 0 0 0 1-1V2a1 1 0 0 0-1-1zM2 5a1 1 0 0 0-1 1v8a1 1 0 0 0 1 1h8a1 1 0 0 0 1-1v-1h1v1a2 2 0 0 1-2 2H2a2 2 0 0 1-2-2V6a2 2 0 0 1 2-2h1v1z"/></svg>
<svg class="ic" style="left:2335.7px;top:1181.0px" width="24" height="24" viewBox="0 0 16 16" fill="#d4d4d4"><path d="M4 2a2 2 0 0 1 2-2h8a2 2 0 0 1 2 2v8a2 2 0 0 1-2 2H6a2 2 0 0 1-2-2zm2-1a1 1 0 0 0-1 1v8a1 1 0 0 0 1 1h8a1 1 0 0 0 1-1V2a1 1 0 0 0-1-1zM2 5a1 1 0 0 0-1 1v8a1 1 0 0 0 1 1h8a1 1 0 0 0 1-1v-1h1v1a2 2 0 0 1-2 2H2a2 2 0 0 1-2-2V6a2 2 0 0 1 2-2h1v1z"/></svg>
<svg class="ic" style="left:351.4px;top:1264.0px" width="24" height="24" viewBox="0 0 16 16" fill="#d4d4d4"><path d="M4 2a2 2 0 0 1 2-2h8a2 2 0 0 1 2 2v8a2 2 0 0 1-2 2H6a2 2 0 0 1-2-2zm2-1a1 1 0 0 0-1 1v8a1 1 0 0 0 1 1h8a1 1 0 0 0 1-1V2a1 1 0 0 0-1-1zM2 5a1 1 0 0 0-1 1v8a1 1 0 0 0 1 1h8a1 1 0 0 0 1-1v-1h1v1a2 2 0 0 1-2 2H2a2 2 0 0 1-2-2V6a2 2 0 0 1 2-2h1v1z"/></svg>
<svg class="ic" style="left:748.4px;top:1264.0px" width="24" height="24" viewBox="0 0 16 16" fill="#d4d4d4"><path d="M4 2a2 2 0 0 1 2-2h8a2 2 0 0 1 2 2v8a2 2 0 0 1-2 2H6a2 2 0 0 1-2-2zm2-1a1 1 0 0 0-1 1v8a1 1 0 0 0 1 1h8a1 1 0 0 0 1-1V2a1 1 0 0 0-1-1zM2 5a1 1 0 0 0-1 1v8a1 1 0 0 0 1 1h8a1 1 0 0 0 1-1v-1h1v1a2 2 0 0 1-2 2H2a2 2 0 0 1-2-2V6a2 2 0 0 1 2-2h1v1z"/></svg>
<svg class="ic" style="left:1330.3px;top:1264.0px" width="24" height="24" viewBox="0 0 16 16" fill="#d4d4d4"><path d="M4 2a2 2 0 0 1 2-2h8a2 2 0 0 1 2 2v8a2 2 0 0 1-2 2H6a2 2 0 0 1-2-2zm2-1a1 1 0 0 0-1 1v8a1 1 0 0 0 1 1h8a1 1 0 0 0 1-1V2a1 1 0 0 0-1-1zM2 5a1 1 0 0 0-1 1v8a1 1 0 0 0 1 1h8a1 1 0 0 0 1-1v-1h1v1a2 2 0 0 1-2 2H2a2 2 0 0 1-2-2V6a2 2 0 0 1 2-2h1v1z"/></svg>
<svg class="ic" style="left:2352.5px;top:1264.0px" width="24" height="24" viewBox="0 0 16 16" fill="#d4d4d4"><path d="M4 2a2 2 0 0 1 2-2h8a2 2 0 0 1 2 2v8a2 2 0 0 1-2 2H6a2 2 0 0 1-2-2zm2-1a1 1 0 0 0-1 1v8a1 1 0 0 0 1 1h8a1 1 0 0 0 1-1V2a1 1 0 0 0-1-1zM2 5a1 1 0 0 0-1 1v8a1 1 0 0 0 1 1h8a1 1 0 0 0 1-1v-1h1v1a2 2 0 0 1-2 2H2a2 2 0 0 1-2-2V6a2 2 0 0 1 2-2h1v1z"/></svg>
<svg class="ic" style="left:80.8px;top:1348.5px" width="30" height="19" viewBox="0 0 30 19"><defs><linearGradient id="mg1" x1="0.35" y1="0.2" x2="0.75" y2="0.9"><stop offset="0" stop-color="#3a78f0"/><stop offset="1" stop-color="#14338f"/></linearGradient></defs><path d="M20.2 1.2c.8-1.3 2.6-1.3 3.4 0l6 10.6c.9 1.6.6 3-.2 4.9-.6 1.3-1.6 2.3-3 2.3H12z" fill="#0f2c82"/><path d="M7.8 1.2c.8-1.3 2.6-1.3 3.4 0L21.5 19H3.5C1.8 19 .6 18.2.2 16.8c-.4-1.3 0-2.6.7-3.800z" fill="#3a78f0"/><path d="M12.5 4.5 21.5 19H12.6L8.2 11.6z" fill="url(#mg1)"/></svg>
<svg class="ic" style="left:205.4px;top:1347.0px" width="24" height="24" viewBox="0 0 16 16" fill="#d4d4d4"><path d="M4 2a2 2 0 0 1 2-2h8a2 2 0 0 1 2 2v8a2 2 0 0 1-2 2H6a2 2 0 0 1-2-2zm2-1a1 1 0 0 0-1 1v8a1 1 0 0 0 1 1h8a1 1 0 0 0 1-1V2a1 1 0 0 0-1-1zM2 5a1 1 0 0 0-1 1v8a1 1 0 0 0 1 1h8a1 1 0 0 0 1-1v-1h1v1a2 2 0 0 1-2 2H2a2 2 0 0 1-2-2V6a2 2 0 0 1 2-2h1v1z"/></svg>
<svg class="ic" style="left:743.1px;top:1349.0px" width="24" height="24" viewBox="0 0 16 16" fill="#d4d4d4"><path d="M4 2a2 2 0 0 1 2-2h8a2 2 0 0 1 2 2v8a2 2 0 0 1-2 2H6a2 2 0 0 1-2-2zm2-1a1 1 0 0 0-1 1v8a1 1 0 0 0 1 1h8a1 1 0 0 0 1-1V2a1 1 0 0 0-1-1zM2 5a1 1 0 0 0-1 1v8a1 1 0 0 0 1 1h8a1 1 0 0 0 1-1v-1h1v1a2 2 0 0 1-2 2H2a2 2 0 0 1-2-2V6a2 2 0 0 1 2-2h1v1z"/></svg>
<svg class="ic" style="left:1176.1px;top:1350.5px" width="30" height="19" viewBox="0 0 30 19"><defs><linearGradient id="mg2" x1="0.35" y1="0.2" x2="0.75" y2="0.9"><stop offset="0" stop-color="#3a78f0"/><stop offset="1" stop-color="#14338f"/></linearGradient></defs><path d="M20.2 1.2c.8-1.3 2.6-1.3 3.4 0l6 10.6c.9 1.6.6 3-.2 4.9-.6 1.3-1.6 2.3-3 2.3H12z" fill="#0f2c82"/><path d="M7.8 1.2c.8-1.3 2.6-1.3 3.4 0L21.5 19H3.5C1.8 19 .6 18.2.2 16.8c-.4-1.3 0-2.6.7-3.800z" fill="#3a78f0"/><path d="M12.5 4.5 21.5 19H12.6L8.2 11.6z" fill="url(#mg2)"/></svg>
<svg class="ic" style="left:2317.2px;top:1347.0px" width="24" height="24" viewBox="0 0 16 16" fill="#d4d4d4"><path d="M4 2a2 2 0 0 1 2-2h8a2 2 0 0 1 2 2v8a2 2 0 0 1-2 2H6a2 2 0 0 1-2-2zm2-1a1 1 0 0 0-1 1v8a1 1 0 0 0 1 1h8a1 1 0 0 0 1-1V2a1 1 0 0 0-1-1zM2 5a1 1 0 0 0-1 1v8a1 1 0 0 0 1 1h8a1 1 0 0 0 1-1v-1h1v1a2 2 0 0 1-2 2H2a2 2 0 0 1-2-2V6a2 2 0 0 1 2-2h1v1z"/></svg>
<svg class="ic" style="left:346.4px;top:1432.0px" width="24" height="24" viewBox="0 0 16 16" fill="#d4d4d4"><path d="M4 2a2 2 0 0 1 2-2h8a2 2 0 0 1 2 2v8a2 2 0 0 1-2 2H6a2 2 0 0 1-2-2zm2-1a1 1 0 0 0-1 1v8a1 1 0 0 0 1 1h8a1 1 0 0 0 1-1V2a1 1 0 0 0-1-1zM2 5a1 1 0 0 0-1 1v8a1 1 0 0 0 1 1h8a1 1 0 0 0 1-1v-1h1v1a2 2 0 0 1-2 2H2a2 2 0 0 1-2-2V6a2 2 0 0 1 2-2h1v1z"/></svg>
<svg class="ic" style="left:743.0px;top:1432.0px" width="24" height="24" viewBox="0 0 16 16" fill="#d4d4d4"><path d="M4 2a2 2 0 0 1 2-2h8a2 2 0 0 1 2 2v8a2 2 0 0 1-2 2H6a2 2 0 0 1-2-2zm2-1a1 1 0 0 0-1 1v8a1 1 0 0 0 1 1h8a1 1 0 0 0 1-1V2a1 1 0 0 0-1-1zM2 5a1 1 0 0 0-1 1v8a1 1 0 0 0 1 1h8a1 1 0 0 0 1-1v-1h1v1a2 2 0 0 1-2 2H2a2 2 0 0 1-2-2V6a2 2 0 0 1 2-2h1v1z"/></svg>
<svg class="ic" style="left:1545.5px;top:1432.0px" width="24" height="24" viewBox="0 0 16 16" fill="#d4d4d4"><path d="M4 2a2 2 0 0 1 2-2h8a2 2 0 0 1 2 2v8a2 2 0 0 1-2 2H6a2 2 0 0 1-2-2zm2-1a1 1 0 0 0-1 1v8a1 1 0 0 0 1 1h8a1 1 0 0 0 1-1V2a1 1 0 0 0-1-1zM2 5a1 1 0 0 0-1 1v8a1 1 0 0 0 1 1h8a1 1 0 0 0 1-1v-1h1v1a2 2 0 0 1-2 2H2a2 2 0 0 1-2-2V6a2 2 0 0 1 2-2h1v1z"/></svg>
<svg class="ic" style="left:2354.5px;top:1432.0px" width="24" height="24" viewBox="0 0 16 16" fill="#d4d4d4"><path d="M4 2a2 2 0 0 1 2-2h8a2 2 0 0 1 2 2v8a2 2 0 0 1-2 2H6a2 2 0 0 1-2-2zm2-1a1 1 0 0 0-1 1v8a1 1 0 0 0 1 1h8a1 1 0 0 0 1-1V2a1 1 0 0 0-1-1zM2 5a1 1 0 0 0-1 1v8a1 1 0 0 0 1 1h8a1 1 0 0 0 1-1v-1h1v1a2 2 0 0 1-2 2H2a2 2 0 0 1-2-2V6a2 2 0 0 1 2-2h1v1z"/></svg>
</body></html>
